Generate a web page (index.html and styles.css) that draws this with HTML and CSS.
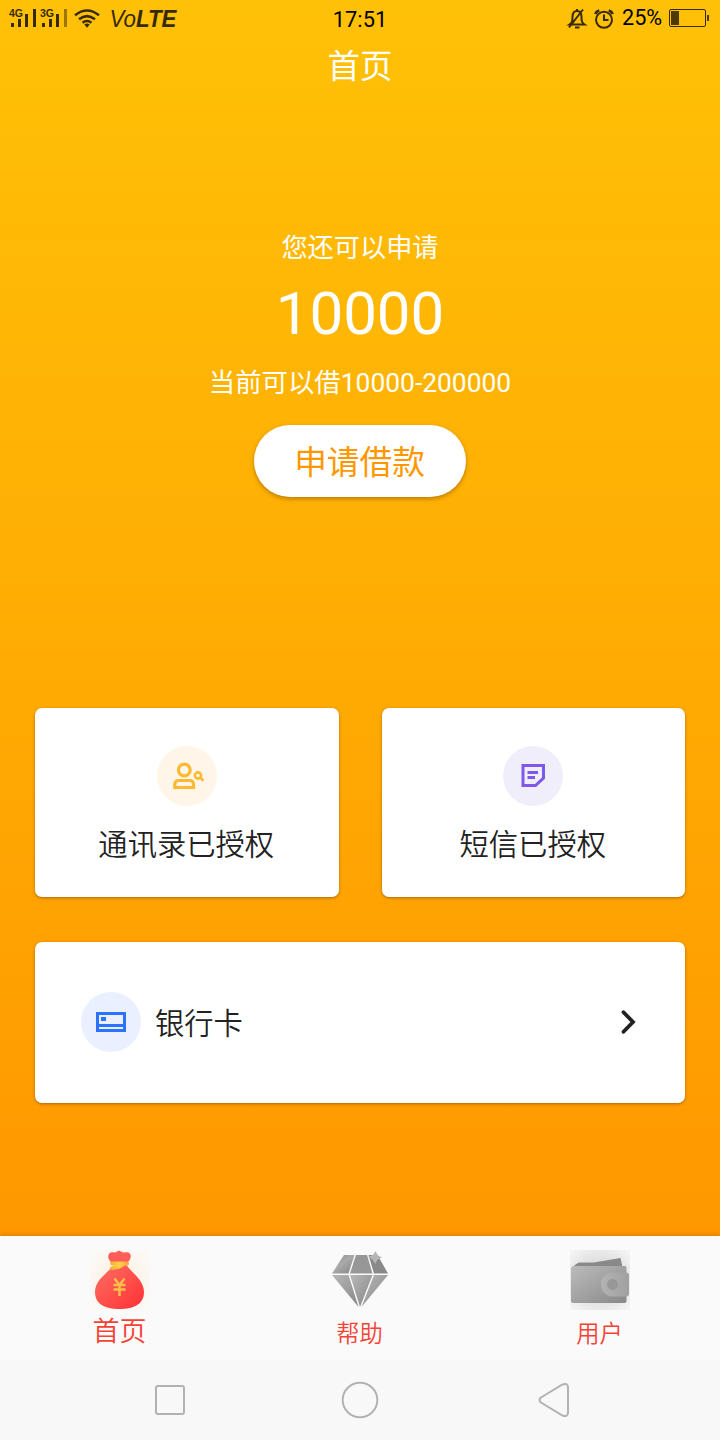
FILE: index.html
```
<!DOCTYPE html>
<html lang="zh-CN">
<head>
<meta charset="utf-8">
<title>首页</title>
<link rel="stylesheet" href="styles.css">
</head>
<body>
<div class="screen">
  <main class="page">
    <div class="status">
      <svg class="status-left" width="190" height="38" viewBox="0 0 190 38" fill="#372b05">
        <text x="9" y="16.500" class="net">4G</text>
        <path d="M11 23h3v4h-3zM18 19h3v8h-3zM25 14h3v13h-3zM33 9h3v18h-3z"/>
        <text x="40" y="16.500" class="net">3G</text>
        <path d="M42 23h3v4h-3zM49 19h3v8h-3zM56 14h3v13h-3z"/>
        <path d="M64 9h3v18h-3z" opacity=".5"/>
        <g fill="none" stroke="#372b05" stroke-width="2.600">
          <path d="M75 15.300Q87 5.700 99 15.300"/><path d="M79 19.300Q87 12.900 95 19.300"/><path d="M82.500 22.700Q87 19.300 91.500 22.700"/>
        </g>
        <path d="M84.300 24.600Q87 22.600 89.700 24.600L87 27.700Z"/>
        <text x="109.500" y="27" class="volte" textLength="67" lengthAdjust="spacingAndGlyphs">Vo<tspan font-weight="bold">LTE</tspan></text>
      </svg>
      <span class="time">17:51</span>
      <div class="status-right">
        <svg width="50" height="26" viewBox="566 5 50 26" fill="none" stroke="#372b05" stroke-width="2">
          <path d="M569.500 23.500c3-2 3-4 3-7.500 0-4 1.500-6 4.500-6s4.500 2 4.500 6c0 3.500 0 5.500 3 7.500zM575 26.500h4.500M577 8v2M569 26.500L583 8.500"/>
          <circle cx="604" cy="18.800" r="8"/>
          <path d="M604 13.500v5.500h4.500"/><path d="M595.300 13q1-2.700 4-3.500M612.700 13q-1-2.700-4-3.500" stroke-width="2.800"/>
        </svg>
        <span class="percent">25%</span>
        <svg width="42" height="20" viewBox="668 9 42 20">
          <rect x="669.500" y="9.500" width="36" height="17" rx="1.500" fill="none" stroke="#372b05"/>
          <path d="M671 11h8v14h-8zM707 15h2v6h-2z" fill="#4c3b05"/>
        </svg>
      </div>
    </div>
    <h1 class="title">首页</h1>
    <section class="hero">
      <p class="hint">您还可以申请</p>
      <p class="amount">10000</p>
      <p class="hint range">当前可以借10000-200000</p>
      <button class="apply">申请借款</button>
    </section>
    <section class="cards">
      <div class="card tile">
        <svg width="60" height="60" viewBox="0 0 60 60" fill="none" stroke="#fdba31">
          <circle cx="30" cy="30" r="30" fill="#fff6e9" stroke="none"/>
          <circle cx="27.300" cy="24" r="5.900" stroke-width="3.200"/>
          <path d="M17.800 41.500v-3q0-4 4-4h10.700q4 0 4 4v3z" stroke-width="3.200"/>
          <circle cx="41" cy="29.500" r="3.100" stroke-width="2.600"/>
          <path d="M43.200 31.700L46.500 34.700" stroke-width="2.600"/>
        </svg>
        <span class="label">通讯录已授权</span>
      </div>
      <div class="card tile">
        <svg width="60" height="60" viewBox="0 0 60 60" fill="none" stroke="#7d58e9" stroke-width="3">
          <circle cx="30" cy="30" r="30" fill="#f1eefc" stroke="none"/>
          <path d="M20 19.500h20.500v12.500l-8 7.500H20zM24.500 26.500h10.500M24.500 31.500h7.500"/>
        </svg>
        <span class="label">短信已授权</span>
      </div>
      <div class="card bank">
        <svg width="60" height="60" viewBox="0 0 60 60">
          <circle cx="30" cy="30" r="30" fill="#eaf0ff"/>
          <path d="M16.500 21.500h27v17h-27zM15 33.500h30" fill="none" stroke="#2d72fc" stroke-width="3"/>
          <path d="M20 25h5v4h-5z" fill="#2d72fc"/>
        </svg>
        <span class="label">银行卡</span>
        <svg class="chevron" width="18" height="26" viewBox="0 0 18 26" fill="none" stroke="#222" stroke-linecap="round"><path d="M3.500 3.200L13 13L3.500 22.800" stroke-width="3.800"/></svg>
      </div>
    </section>
  </main>
  <nav class="tabs">
    <div class="tab active">
      <svg width="60" height="60" viewBox="0 0 60 60">
        <defs>
          <linearGradient id="bag" x1="0" y1="0" x2="1" y2="1"><stop stop-color="#ff7062"/><stop offset="1" stop-color="#ff3036"/></linearGradient>
          <linearGradient id="gold" x1="0" y1="0" x2="1" y2="0"><stop stop-color="#f5a936"/><stop offset=".5" stop-color="#ffd046"/><stop offset="1" stop-color="#ff9e43"/></linearGradient>
          <radialGradient id="glow" r=".7"><stop stop-color="#fff0de"/><stop offset="1" stop-color="#fafafa"/></radialGradient>
        </defs>
        <path d="M0 0h60v60H0z" fill="url(#glow)"/>
        <path d="M21.500 12.500C16 8 18 1.500 23 2.300q3 .5 4-.8 2-1.500 4 0 1.500 1.300 5 .8c5-.8 7 5 1.500 10.200z" fill="#ff5d57"/>
        <path d="M21 18L36 14c3 7 18 15 18 28 0 12-10 17-24.500 17S5 54 5 42C5 31 15 25 21 18Z" fill="url(#bag)"/>
        <path d="M22 11.500h15q2 0 2 2t-2 2h-1.500q-5 3.500-13.500 4.500-2.500 0-2.200-1.800.2-1.200 2.200-1.600l3-1.100H22q-2-.3-2-2t2-2z" fill="url(#gold)"/>
        <path d="M24.500 28.500l5 6.500 5-6.500M23.500 35h12M23.500 39.500h12M29.500 34v12" fill="none" stroke="#f9c047" stroke-width="2.500"/>
      </svg>
      <span class="tab-label">首页</span>
    </div>
    <div class="tab">
      <svg width="60" height="60" viewBox="0 0 60 60">
        <defs><linearGradient id="gem" x1="0" y1="0" x2="1" y2="1"><stop stop-color="#858585"/><stop offset=".45" stop-color="#aaa"/><stop offset="1" stop-color="#858585"/></linearGradient>
        <linearGradient id="facet" x1="0" y1="0" x2="1" y2="1"><stop stop-color="#b8b8b8"/><stop offset="1" stop-color="#868686"/></linearGradient></defs>
        <path d="M14 5h10.500l-6 18.500H2z" fill="url(#gem)"/>
        <path d="M26 5h11l5.500 18.500H20z" fill="#979797"/>
        <path d="M38.500 5h9L58 23.500H44z" fill="#898989"/>
        <path d="M2 25h16.500L28.500 57z" fill="url(#facet)"/><path d="M20 25h22.500L30 57z" fill="url(#facet)"/><path d="M44 25H58L31.500 57z" fill="url(#facet)"/>
        <path d="M45.500 1l2.500 4.500L52 7.500l-4.500 2-2.500 4.500-2.500-4.500-4.500-2.500 5-2z" fill="#b5b5b5"/>
      </svg>
      <span class="tab-label">帮助</span>
    </div>
    <div class="tab">
      <svg width="60" height="60" viewBox="0 0 60 60">
        <defs><linearGradient id="wallet" x1="0" y1="0" x2="1" y2="1"><stop stop-color="#bbb"/><stop offset="1" stop-color="#898989"/></linearGradient>
        <linearGradient id="clasp"><stop stop-color="#b3b3b3"/><stop offset="1" stop-color="#a0a0a0"/></linearGradient>
        <radialGradient id="shade" r=".72"><stop stop-color="#ccc"/><stop offset="1" stop-color="#f7f7f7"/></radialGradient></defs>
        <path d="M0 0h60v60H0z" fill="url(#shade)"/>
        <path d="M3 17q4-4.500 7-4.500h14L50.500 8l2 9z" fill="#898989"/>
        <path d="M5 16h50q1.500 0 1.500 2v33q0 2-2 2H3q-2 0-2-2V18q0-2 4-2z" fill="url(#wallet)"/>
        <path d="M43 22.500h13q3 0 3 3v18q0 3-3 3H43a12 12 0 010-24z" fill="url(#clasp)"/>
        <circle cx="42.500" cy="34.500" r="5.500" fill="#989898"/>
      </svg>
      <span class="tab-label">用户</span>
    </div>
  </nav>
  <div class="system">
    <svg width="720" height="80" viewBox="0 0 720 80" fill="none" stroke="#b2b2b2" stroke-width="2">
      <rect x="156" y="26" width="28" height="28" rx="2"/>
      <circle cx="360" cy="40" r="17.300"/>
      <path d="M541 37.500L562.500 24.500Q567.500 22.500 568 27V53Q567.500 57.500 562.500 55.500L541 42.500Q538 40 541 37.500Z"/>
    </svg>
  </div>
</div>
</body>
</html>
```
FILE: styles.css
```
* { box-sizing: border-box; }
body, h1, p { margin: 0; }
body { font-family: Roboto, "Noto Sans CJK SC", sans-serif; }
svg { display: block; flex: none; }
.screen { width: 720px; height: 1440px; display: flex; flex-direction: column; overflow: hidden; }
.page { height: 1236px; background: linear-gradient(#ffc107, #ff9800); color: #fff; }
.status { height: 38px; display: grid; grid-template-columns: 1fr auto 1fr; grid-template-rows: 38px; align-items: center; color: #000; font-size: 22px; line-height: 38px; }
.net { font: bold 10.500px "Liberation Sans", sans-serif; }
.volte { font: italic 23px "Liberation Sans", sans-serif; }
.time { font-size: 21.800px; padding-top: 2px; }
.status-right { display: flex; align-items: center; justify-content: flex-end; padding-right: 10px; }
.status-right .percent { width: 40px; margin: 0 6px; white-space: nowrap; line-height: 36px; height: 38px; font-size: 21.600px; }
.title { height: 56px; padding-top: 1px; line-height: 56px; text-align: center; font-size: 32.500px; font-weight: 400; }
.hero { padding-top: 134px; height: 614px; display: flex; flex-direction: column; align-items: center; }
.hint { font-size: 26.200px; line-height: 40px; height: 40px; }
.amount { font-size: 60px; line-height: 72px; height: 72px; margin-top: 10px; }
.range { margin-top: 12.500px; font-size: 26.400px; }
.apply { width: 212px; height: 72px; margin-top: 22px; padding: 4px 1px 0 0; border: 0; border-radius: 36px; background: #fff; color: #ff9800; font: 32.700px/68px Roboto, "Noto Sans CJK SC", sans-serif; box-shadow: 0 2px 4px rgba(90, 50, 0, .4); }
.cards { display: grid; grid-template-columns: 1fr 1fr; grid-template-rows: 189px 161px; gap: 44.500px 43px; padding: 0 35px; }
.card { background: #fff; border-radius: 7px; color: #222; box-shadow: 0 1px 3px rgba(90, 50, 0, .5); }
.tile { display: flex; flex-direction: column; align-items: center; padding-top: 37.500px; }
.label { font-size: 29.300px; line-height: 42px; font-weight: 350; }
.tile .label { margin: 18px 1px 0 0; }
.bank { grid-column: 1 / -1; display: flex; align-items: center; padding: 0 47px 0 46px; }
.bank .label { margin-left: 14px; padding-top: 4px; }
.chevron { margin-left: auto; }
.tabs { height: 124px; background: #fafafa; display: grid; grid-template-columns: repeat(3, 240px); color: #f44336; box-shadow: 0 -1px 5px rgba(130, 60, 0, .3); z-index: 1; }
.tab { display: flex; flex-direction: column; align-items: center; padding-top: 14px; }
.tab-label { font-size: 23.300px; line-height: 34px; margin: 7px 1px 0 0; font-weight: 350; }
.active .tab-label { font-size: 27px; margin-top: 5px; }
.system { height: 80px; background: #f8f8f8; z-index: 2; }
```
